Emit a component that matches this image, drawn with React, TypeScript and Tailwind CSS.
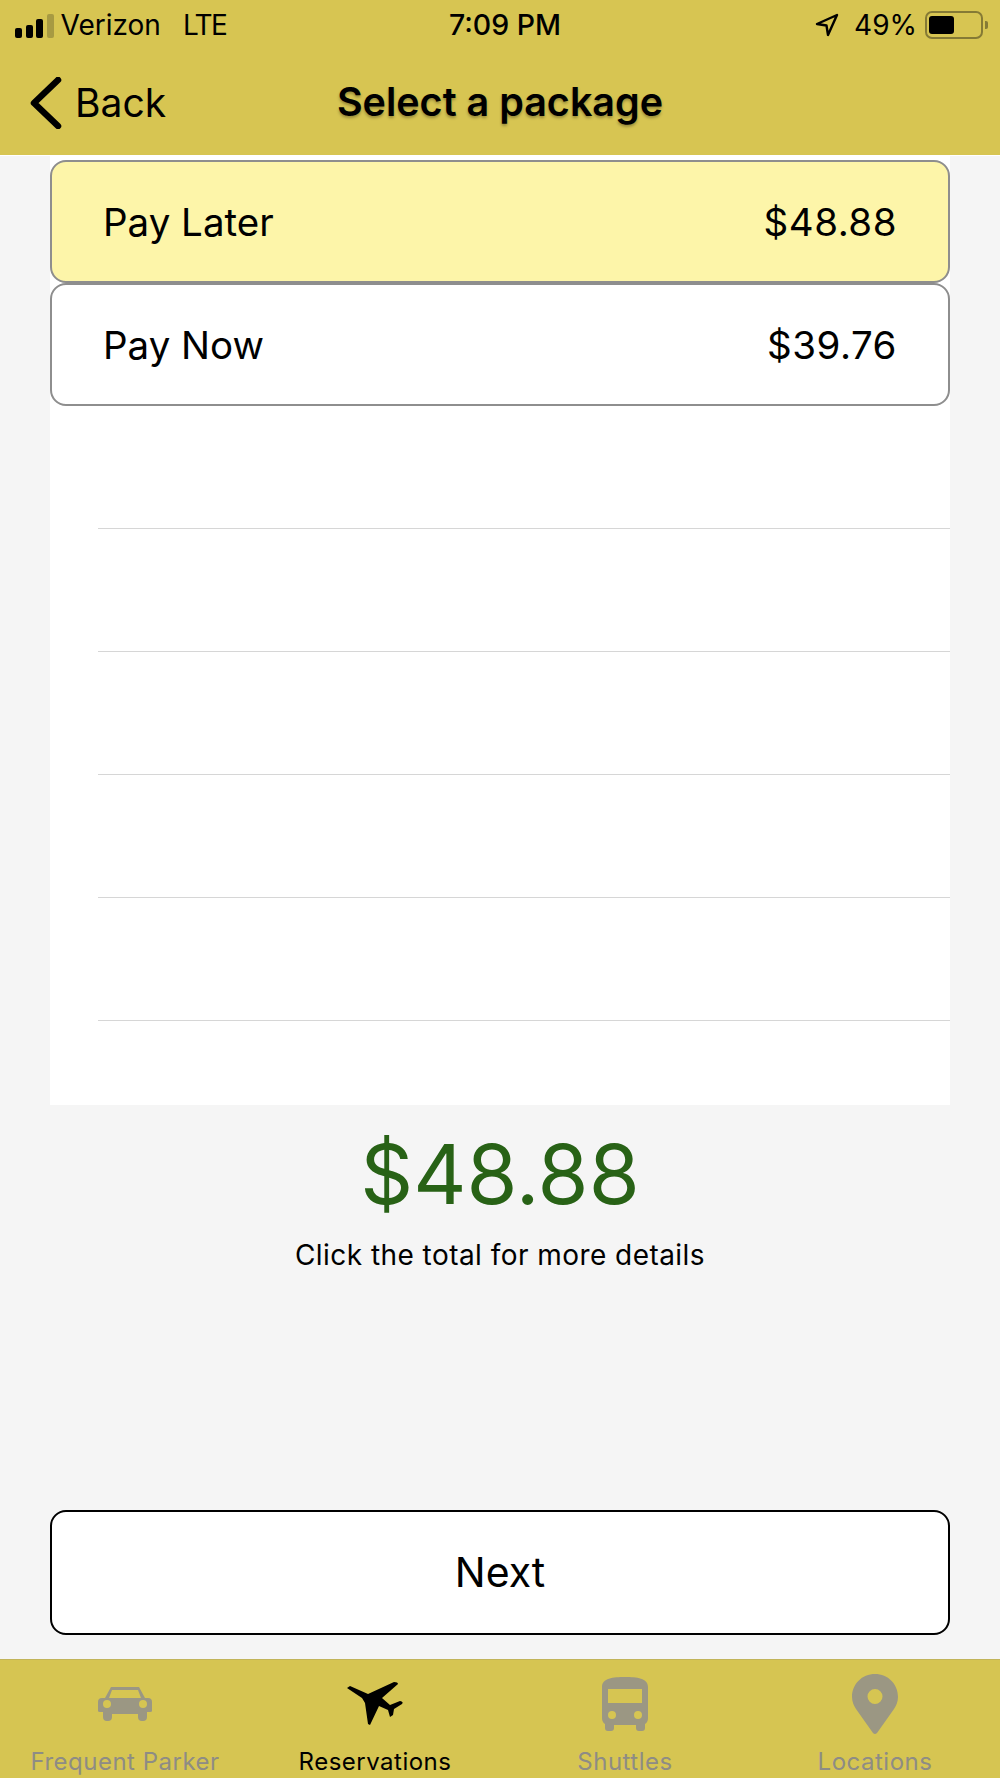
const GRAY = "#9b9783";

function StatusBar() {
  return (
    <div className="flex h-[50px] items-center pl-[15px] pr-[12px] text-[28px] text-black">
      <div className="flex w-[402px] items-center">
        <div className="flex items-end gap-[3.5px] pt-[1px]">
          <span className="h-[10px] w-[7px] rounded-[2px] bg-black" />
          <span className="h-[13px] w-[7px] rounded-[2px] bg-black" />
          <span className="h-[19px] w-[7px] rounded-[2px] bg-black" />
          <span className="h-[24px] w-[7px] rounded-[2px] bg-[#a79a42]" />
        </div>
        <span className="ml-[7px] leading-none">Verizon</span>
        <span className="ml-[22px] leading-none tracking-[-1.6px]">LTE</span>
      </div>
      <div className="w-[176px] text-center text-[28.5px] font-medium leading-none">7:09 PM</div>
      <div className="ml-auto flex items-center">
        <svg width="24" height="24" viewBox="0 0 24 24" fill="none" stroke="black" strokeWidth="2.4" strokeLinejoin="round">
          <path d="M2 11 L22 2 L13 22 L11.5 12.5 Z" />
        </svg>
        <span className="ml-[15px] leading-none">49%</span>
        <div className="ml-[8px] flex h-[28px] w-[58px] items-center rounded-[7px] border-2 border-[#857a35] px-[2px]">
          <div className="h-[18px] w-[25px] rounded-[3px] bg-black" />
        </div>
        <div className="ml-[2px] h-[8px] w-[3px] rounded-r-[2px] bg-[#857a35]" />
      </div>
    </div>
  );
}

function Header() {
  return (
    <div className="relative flex h-[105px] items-center">
      <div className="flex items-center pl-[30px]">
        <svg width="32" height="52" viewBox="0 0 32 52" fill="none" stroke="black" strokeWidth="6.5" strokeLinecap="round" strokeLinejoin="round">
          <path d="M28 3 L4 26 L28 49" />
        </svg>
        <span className="ml-[13px] text-[39px] leading-none text-black">Back</span>
      </div>
      <div className="absolute inset-x-0 text-center text-[39.5px] font-semibold leading-none text-black [text-shadow:0_2px_3px_rgba(0,0,0,0.3)]">
        Select a package
      </div>
    </div>
  );
}

function PackageRow({ name, price, selected }: { name: string; price: string; selected?: boolean }) {
  return (
    <div
      className={
        selected
          ? "flex h-[123px] items-center justify-between rounded-[16px] border-[2.5px] border-[#8e8e8e] bg-[#fdf5a9] pl-[51px] pr-[51px] pt-[2px] text-[38.5px] text-black"
          : "flex h-[123px] items-center justify-between rounded-[16px] border-[2.5px] border-[#8e8e8e] bg-white pl-[51px] pr-[51px] pt-[2px] text-[38.5px] text-black"
      }
    >
      <span>{name}</span>
      <span className="tracking-[0.5px]">{price}</span>
    </div>
  );
}

function EmptyRow() {
  return (
    <div className="h-[123px] pl-[48px]">
      <div className="h-full border-b border-[#d6d6d6]" />
    </div>
  );
}

function Tab({ label, active, children }: { label: string; active?: boolean; children: React.ReactNode }) {
  return (
    <div className="flex w-[250px] flex-col items-center">
      <div className="flex h-[64px] items-center justify-center">{children}</div>
      <span className={active ? "mt-[14px] text-[24px] leading-none tracking-[0.5px] text-black" : "mt-[14px] text-[24px] leading-none tracking-[0.5px] text-[#8e8c85]"}>
        {label}
      </span>
    </div>
  );
}

export default function App() {
  return (
    <div className="flex h-[1778px] w-[1000px] flex-col overflow-hidden bg-[#f5f5f5] font-['Inter','Liberation_Sans',sans-serif]">
      <div className="border-b border-white bg-[#d7c552]">
        <StatusBar />
        <Header />
      </div>
      <div className="mx-[50px] bg-white pt-[4px]">
        <PackageRow name="Pay Later" price="$48.88" selected />
        <PackageRow name="Pay Now" price="$39.76" />
        <EmptyRow />
        <EmptyRow />
        <EmptyRow />
        <EmptyRow />
        <EmptyRow />
        <div className="h-[84px]" />
      </div>
      <div className="mt-[23px] text-center text-[82.5px] leading-[92px] text-[#286216]">$48.88</div>
      <div className="mt-[18px] text-center text-[28px] leading-[34px] tracking-[0.45px] text-black">Click the total for more details</div>
      <div className="mx-[50px] mt-[238px] flex h-[125px] items-center justify-center rounded-[16px] border-[2.5px] border-black bg-white text-[41px] text-black">
        Next
      </div>
      <div className="mt-[24px] flex flex-1 border-t border-[#c2b45a] bg-[#d6c552] pt-[12px]">
        <Tab label="Frequent Parker">
          <svg width="54" height="34" viewBox="0 0 54 34" fill={GRAY}>
            <path fillRule="evenodd" d="M13 0 H41 L47 11 H50 Q54 11 54 15 V24 Q54 25 52 25 H49 V30 Q49 34 45 34 H44 Q40 34 40 30 V27 H14 V30 Q14 34 10 34 H9 Q5 34 5 30 V25 H2 Q0 25 0 24 V15 Q0 11 4 11 H7 Z M14 3 L11 11 H43 L40 3 Z M9 13 A4 4 0 1 0 9.01 21 A4 4 0 1 0 9 13 Z M45 13 A4 4 0 1 0 45.01 21 A4 4 0 1 0 45 13 Z" />
          </svg>
        </Tab>
        <Tab label="Reservations" active>
          <svg width="58" height="44" viewBox="0 0 58 44" fill="black">
            <path d="M1 6 L4 4 L22 12 L48 0 Q52 0 52 2 L36 16 L44 23 L54 19 Q58 20 56 22 L48 27 L47 33 L44 35 L42 28 L33 24 L24 43 L22 42 L19 21 L16 16 Z" />
          </svg>
        </Tab>
        <Tab label="Shuttles">
          <svg width="46" height="54" viewBox="0 0 46 54" fill={GRAY}>
            <path fillRule="evenodd" d="M23 0 C35 0 46 1 46 10 V41 Q46 45 43 47 V51 Q43 54 40 54 H37 Q34 54 34 51 V48 H12 V51 Q12 54 9 54 H6 Q3 54 3 51 V47 Q0 45 0 41 V10 C0 1 11 0 23 0 Z M6 12 V26 H40 V12 Z M10 34 A4 4 0 1 0 10.01 42 A4 4 0 1 0 10 34 Z M36 34 A4 4 0 1 0 36.01 42 A4 4 0 1 0 36 34 Z" />
          </svg>
        </Tab>
        <Tab label="Locations">
          <svg width="46" height="60" viewBox="0 0 46 60" fill={GRAY}>
            <path fillRule="evenodd" d="M23 0 C36 0 46 10 46 23 C46 28 44 32 42 35 L25 59 Q23 61 21 59 L4 35 C2 32 0 28 0 23 C0 10 10 0 23 0 Z M23 15 A7.5 7.5 0 1 0 23.01 30 A7.5 7.5 0 1 0 23 15 Z" />
          </svg>
        </Tab>
      </div>
    </div>
  );
}
